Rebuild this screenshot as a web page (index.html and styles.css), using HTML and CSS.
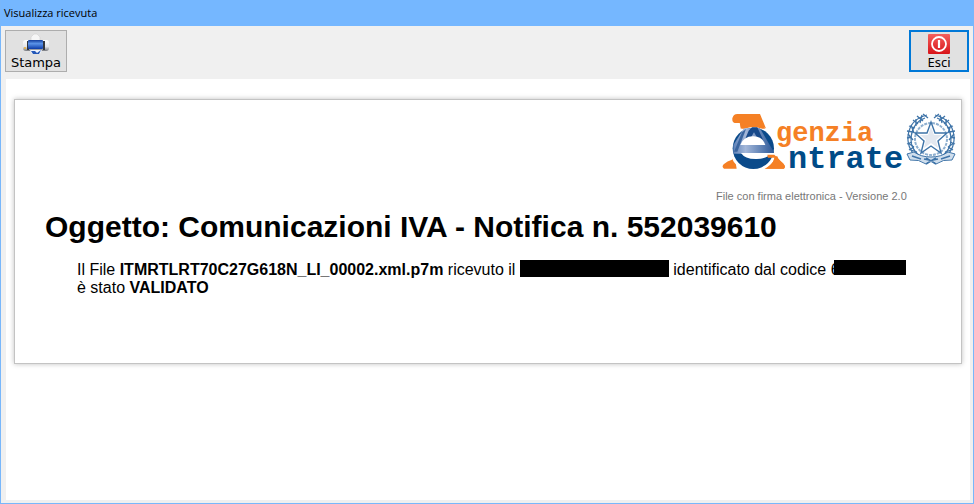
FILE: index.html
```
<!DOCTYPE html>
<html lang="it">
<head>
  <meta charset="UTF-8">
  <title>Visualizza ricevuta</title>
  <link rel="stylesheet" href="styles.css">
</head>
<body>
  <div class="window">
    <header class="titlebar">Visualizza ricevuta</header>

    <div class="toolbar">
      <button type="button" class="tool-btn" id="stampa">
        <svg class="icon" viewBox="0 0 26 22" aria-hidden="true">
          <defs>
            <linearGradient id="blue" x1="0" y1="0" x2="0" y2="1">
              <stop offset="0" stop-color="#123c9c"/>
              <stop offset=".4" stop-color="#5b93e8"/>
              <stop offset="1" stop-color="#0b3aa8"/>
            </linearGradient>
            <linearGradient id="shell" x1="0" y1="0" x2="0" y2="1">
              <stop offset="0" stop-color="#ffffff"/>
              <stop offset=".6" stop-color="#e4e6ea"/>
              <stop offset="1" stop-color="#77797e"/>
            </linearGradient>
          </defs>
          <path d="M8 8V4l3-3h3l3 3v4z" fill="#f6f6f6" stroke="#d2d2d2" stroke-width=".6"/>
          <rect x="0" y="7" width="26" height="11" rx="3" fill="url(#shell)"/>
          <path d="M4 8h2v9H4zM20 8h2v9h-2z" fill="#33373f"/>
          <rect x="5" y="7" width="15" height="9" rx="1" fill="url(#blue)"/>
          <path d="M7 17h12l-2 4H9z" fill="#eef3fb"/>
          <path d="M8 18h4l2 2 4-3-2 4H10z" fill="#2458b8"/>
          <circle cx="2" cy="15" r="1" fill="#f0b030"/>
        </svg>
        Stampa
      </button>
      <button type="button" class="tool-btn active" id="esci">
        <svg class="icon" viewBox="0 0 26 22" aria-hidden="true">
          <defs>
            <linearGradient id="red" x1="0" y1="0" x2="0" y2="1">
              <stop offset="0" stop-color="#f4605c"/>
              <stop offset="1" stop-color="#d8141a"/>
            </linearGradient>
          </defs>
          <rect x="2" y="2" width="22" height="20" rx="1" fill="url(#red)"/>
          <circle cx="13" cy="12" r="7" fill="none" stroke="#fff" stroke-width="1.8"/>
          <path d="M13 8v8" stroke="#fff" stroke-width="2.2"/>
        </svg>
        Esci
      </button>
    </div>

    <main class="viewer">
      <article class="receipt">
        <div class="brand">
          <svg class="logo" viewBox="0 0 240 64" role="img" aria-label="Agenzia Entrate">
            <defs>
              <linearGradient id="disc" x1="0" y1="0" x2="1" y2="0">
                <stop offset="0" stop-color="#5f82b8"/>
                <stop offset=".3" stop-color="#a3b7d9"/>
                <stop offset="1" stop-color="#2a5798"/>
              </linearGradient>
              <clipPath id="round"><circle cx="130" cy="130" r="66"/></clipPath>
            </defs>
            <svg x="0" y="0" width="70" height="64" viewBox="30 15 210 192">
              <path d="M82 27H150L205 161Q210 168 219 175Q228 185 222 191H162L150 160H85L76 168L80 191H42Q34 186 41 178Q52 168 66 164L92 70L90 54H74Q66 52 67 40Q70 27 82 27Z" fill="#f58025"/>
              <circle cx="130" cy="130" r="71" fill="#fff"/>
              <path d="M88 50H156L165 71H94Z" fill="#f58025"/>
              <circle cx="130" cy="132" r="66" fill="#fff"/>
              <circle cx="130" cy="130" r="62" fill="#0a4a8a"/>
              <g clip-path="url(#round)">
                <path d="M102 70H150L192 142L190 146H70V120Z" fill="url(#disc)"/>
                <path d="M116 77L126 67H142L160 106H146L132 82L118 106H104Z" fill="#17498a"/>
                <path d="M96 82L108 72L82 140H72Z" fill="#3a659f"/>
              </g>
              <path d="M91 120Q101 93 131 94Q158 95 166 120Z" fill="#fff"/>
              <path d="M93 144H203V154H174Q162 161 140 162Q105 163 93 144Z" fill="#fff"/>
              <path d="M172 149H193L221 177Q229 187 221 191H164Q190 181 193 158H174Z" fill="#f58025"/>
            </svg>
            <text class="logo-top" x="56" y="31">genzia</text>
            <text class="logo-bottom" x="68" y="58">ntrate</text>
            <g class="emblem" transform="translate(211 29)">
              <circle r="16" stroke="#8fb0d0" stroke-width="2" stroke-dasharray="3 1"/>
              <path d="M0-17L4-6 16-6 7 2 10 14 0 7-10 14-7 2-16-6-4-6Z" fill="#fff" stroke-width="1.4"/>
              <path d="M0-12L3-4 11-4 5 1 7 9 0 4-7 9-5 1-11-4-3-4Z" fill="#e3e8f0" stroke="none"/>
              <path d="M-4-24Q-21-20-23-3Q-24 12-11 20M-6-21Q-18-17-20-2Q-21 10-11 17" stroke-width="1.2"/>
              <path d="M4-24Q21-20 23-3Q24 12 11 20M6-21Q18-17 20-2Q21 10 11 17" stroke-width="1.2"/>
              <path d="M-3-21l-5-4M-8-18l-6-5M-13-15l-5-4M-16-11l-6-2M-18-7l-6-1M-19-2l-5 1M-19 3l-5 2M-17 8l-5 3M-14 13l-5 3M-9-24l-2 8M-15-20l0 7M-20-14l3 8M-23-5l5 6M-23 4l6 4M-20 11l6 2" stroke-width="1.3"/>
              <path d="M3-21l5-4M8-18l6-5M13-15l5-4M16-11l6-2M18-7l6-1M19-2l5 1M19 3l5 2M17 8l5 3M14 13l5 3M9-24l2 8M15-20l0 7M20-14l-3 8M23-5l-5 6M23 4l-6 4M20 11l-6 2" stroke-width="1.3"/>
              <path d="M-24 15L-17 13Q-10 18 0 18Q10 18 17 13L24 15L21 21Q12 20 5 25L0 21-5 25Q-12 20-21 21Z" fill="#cfdeed" stroke-width="1"/>
              <path d="M-19 17l9 3M19 17l-9 3M-7 20l5 1M7 20l-5 1M-5 19L5 25M5 19L-5 25" stroke-width="1.5"/>
            </g>
          </svg>
          <p class="version">File con firma elettronica - Versione 2.0</p>
        </div>

        <h1>Oggetto: Comunicazioni IVA - Notifica n. 552039610</h1>
        <p class="message">
          Il File <b>ITMRTLRT70C27G618N_LI_00002.xml.p7m</b> ricevuto il <span class="redacted date"></span> identificato dal codice 6<span class="redacted code"></span><br>
          è stato <b>VALIDATO</b>
        </p>
      </article>
    </main>
  </div>
</body>
</html>
```
FILE: styles.css
```
* { box-sizing: border-box; }
body { margin: 0; font-family: "Liberation Sans", Arial, sans-serif; color: #000; }

.window { display: flex; flex-direction: column; min-height: 100vh; background: #f0f0f0; border: 1px solid #78b7fb; border-top: none; }
.titlebar { height: 26px; padding-left: 3px; background: #75b7ff; font: 11px/26px "Open Sans", "Segoe UI", sans-serif; }

.toolbar { display: flex; justify-content: space-between; padding: 4px 4px 7px; }
.tool-btn { display: flex; flex-direction: column; align-items: center; justify-content: flex-end; width: 62px; height: 42px; padding: 0; background: #e1e1e1; border: 1px solid #adadad; font: 13px/16px "DejaVu Sans", Verdana, sans-serif; color: #000; }
.tool-btn.active { width: 60px; border: 2px solid #0078d7; font-family: "Noto Sans", Tahoma, sans-serif; }
.icon { width: 26px; height: 22px; }

.viewer { flex: 1; margin: 0 3px 3px 5px; padding: 20px 8px; background: #fff; }
.receipt { min-height: 265px; padding: 10px 3px 32px 30px; border: 1px solid #c3c3c3; box-shadow: 0 0 5px rgba(0,0,0,0.25); }

.brand { width: 242px; margin-left: auto; }
.logo { display: block; width: 240px; height: 64px; margin-left: 4px; overflow: visible; }
.logo-top { font: bold 27px "Liberation Mono", "Courier New", monospace; fill: #f58025; }
.logo-bottom { font: bold 32px "Liberation Mono", "Courier New", monospace; fill: #004b87; }
.emblem { fill: none; stroke: #3f74a8; }
.version { margin: 15px 0 0; font-size: 11px; line-height: 14px; color: #777; }

h1 { margin: 6px 0 0; font-size: 30px; line-height: 36px; }
.message { margin: 15px 32px 0; font-size: 16px; line-height: 18px; }
.redacted { display: inline-block; background: #000; }
.date { width: 149px; height: 17px; vertical-align: -2px; }
.code { width: 72px; height: 15px; margin-left: -6px; vertical-align: 0; }
```
